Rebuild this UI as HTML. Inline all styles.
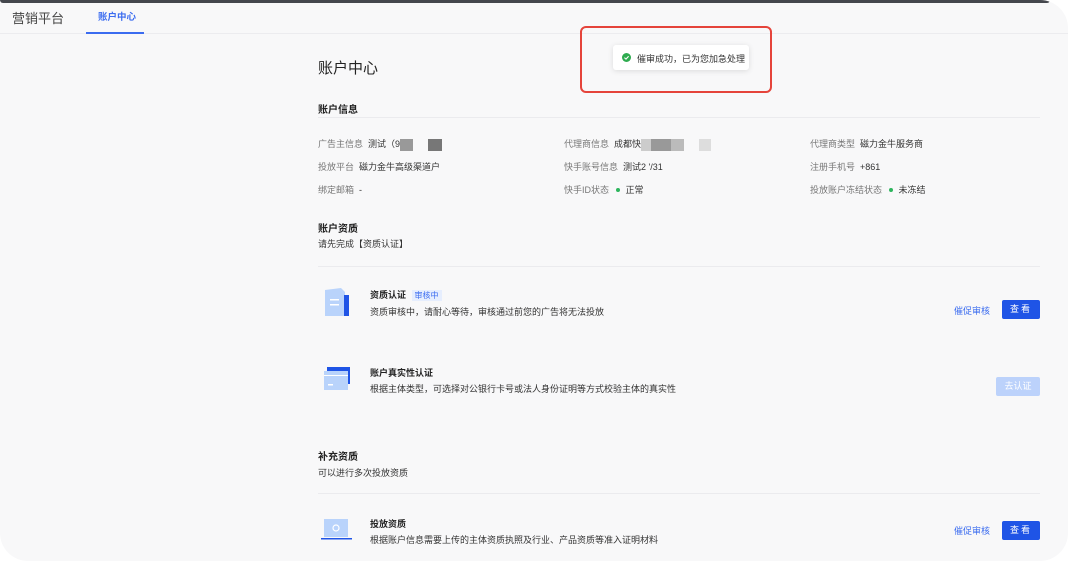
<!DOCTYPE html><html><head><meta charset="utf-8"><style>
*{margin:0;padding:0;box-sizing:border-box}
body{width:1068px;height:561px;overflow:hidden;background:#fff;font-family:"Liberation Sans","Noto Sans CJK SC",sans-serif;position:relative;color:#333}
.frame{position:absolute;left:0;top:0;width:1068px;height:561px;background:#f8f8f9;border-radius:0 28px 28px 28px;overflow:hidden}
.topbar{position:absolute;left:0;top:0;width:1050px;height:3px;background:#44474d;border-radius:0 0 3px 3px}
.nav{position:absolute;left:0;top:3px;width:1068px;height:31px;border-bottom:1px solid #ececef}
.a{position:absolute;white-space:nowrap}
.lbl{color:#777;font-size:9px}
.val{color:#333;font-size:9px}
.hline{position:absolute;left:318px;width:722px;height:1px;background:#ebebee}
.btn{position:absolute;width:38px;height:19px;background:#1f54e6;color:#fff;font-size:9px;text-align:center;line-height:19px;border-radius:2px;letter-spacing:2px}
.link{color:#3b6cf0;font-size:9px}
.dot{display:inline-block;width:4px;height:4px;border-radius:50%;background:#2db55d;margin:0 6px 1px 4px}
.blur{display:inline-block;height:12px;vertical-align:middle}
</style></head><body>
<div class="frame">
<div class="topbar"></div>
<div class="nav"></div>
<div class="a" style="left:12px;top:8px;font-size:13px;color:#444">营销平台</div>
<div class="a" style="left:98px;top:9px;font-size:9.5px;color:#3b6cf0;font-weight:bold">账户中心</div>
<div class="a" style="left:86px;top:32px;width:58px;height:2px;background:#3b6cf0"></div>

<div class="a" style="left:318px;top:57px;font-size:15px;color:#222">账户中心</div>
<div class="a" style="left:318px;top:101px;font-size:10px;font-weight:bold;color:#222">账户信息</div>
<div class="hline" style="top:117px"></div>

<div class="a lbl" style="left:318px;top:137px">广告主信息 <span class="val">&nbsp;测试（9<span class="blur" style="width:13px;background:#999"></span><span class="blur" style="width:14px;margin-left:15px;background:#777"></span></span></div>
<div class="a lbl" style="left:318px;top:160px">投放平台 <span class="val">&nbsp;磁力金牛高级渠道户</span></div>
<div class="a lbl" style="left:318px;top:183px">绑定邮箱 <span class="val">&nbsp;-</span></div>

<div class="a lbl" style="left:564px;top:137px">代理商信息 <span class="val">&nbsp;成都快<span class="blur" style="width:10px;background:#ccc"></span><span class="blur" style="width:20px;background:#999"></span><span class="blur" style="width:13px;background:#bbb"></span><span class="blur" style="width:12px;background:#ddd;margin-left:15px"></span></span></div>
<div class="a lbl" style="left:564px;top:160px">快手账号信息 <span class="val">&nbsp;测试2 '/31</span></div>
<div class="a lbl" style="left:564px;top:183px">快手ID状态 <span class="dot"></span><span class="val">正常</span></div>

<div class="a lbl" style="left:810px;top:137px">代理商类型 <span class="val">&nbsp;磁力金牛服务商</span></div>
<div class="a lbl" style="left:810px;top:160px">注册手机号 <span class="val">&nbsp;+861</span></div>
<div class="a lbl" style="left:810px;top:183px">投放账户冻结状态 <span class="dot"></span><span class="val">未冻结</span></div>

<div class="a" style="left:318px;top:220px;font-size:10px;font-weight:bold;color:#222">账户资质</div>
<div class="a val" style="left:318px;top:237px">请先完成【资质认证】</div>
<div class="hline" style="top:266px"></div>

<svg class="a" style="left:323px;top:287px" width="28" height="32"><path d="M2 3 L18 1 L22 5 L22 29 L2 29Z" fill="#b9d3fb"/><rect x="21" y="8" width="5" height="21" fill="#1f54e6"/><rect x="7" y="12" width="9" height="1.5" fill="#fff"/><rect x="7" y="17" width="9" height="1.5" fill="#fff"/></svg>
<div class="a" style="left:370px;top:288px;font-size:9px;font-weight:bold;color:#222">资质认证 <span style="font-weight:normal;color:#3b6cf0;background:#e6eefe;font-size:8px;padding:1px 3px;margin-left:3px">审核中</span></div>
<div class="a val" style="left:370px;top:305px">资质审核中，请耐心等待，审核通过前您的广告将无法投放</div>
<div class="a link" style="left:954px;top:304px">催促审核</div>
<div class="btn" style="left:1002px;top:300px">查看</div>

<svg class="a" style="left:323px;top:366px" width="28" height="26"><rect x="4" y="1" width="23" height="17" fill="#1f54e6"/><rect x="1" y="5" width="24" height="19" fill="#b9d3fb"/><rect x="1" y="9" width="24" height="1" fill="#fff"/><rect x="5" y="18" width="5" height="1.5" fill="#fff"/></svg>
<div class="a" style="left:370px;top:366px;font-size:9px;font-weight:bold;color:#222">账户真实性认证</div>
<div class="a val" style="left:370px;top:382px">根据主体类型，可选择对公银行卡号或法人身份证明等方式校验主体的真实性</div>
<div class="btn" style="left:996px;top:377px;width:44px;background:#bcd2fb;letter-spacing:0">去认证</div>

<div class="a" style="left:318px;top:448px;font-size:10px;font-weight:bold;color:#222">补充资质</div>
<div class="a val" style="left:318px;top:466px">可以进行多次投放资质</div>
<div class="hline" style="top:493px"></div>

<svg class="a" style="left:321px;top:519px" width="32" height="22"><rect x="3" y="0" width="24" height="18" fill="#b9d3fb"/><circle cx="15" cy="9" r="3" fill="none" stroke="#fff" stroke-width="1.2"/><rect x="0" y="19" width="31" height="1.5" fill="#1f54e6"/></svg>
<div class="a" style="left:370px;top:517px;font-size:9px;font-weight:bold;color:#222">投放资质</div>
<div class="a val" style="left:370px;top:533px">根据账户信息需要上传的主体资质执照及行业、产品资质等准入证明材料</div>
<div class="a link" style="left:954px;top:524px">催促审核</div>
<div class="btn" style="left:1002px;top:521px">查看</div>

<div class="a" style="left:613px;top:45px;width:136px;height:25px;background:#fff;box-shadow:0 1px 6px rgba(0,0,0,.12);border-radius:3px"></div>
<svg class="a" style="left:622px;top:53px" width="9" height="9"><circle cx="4.5" cy="4.5" r="4.5" fill="#2eab4f"/><path d="M2.4 4.6 L4 6.1 L6.6 3.2" fill="none" stroke="#fff" stroke-width="1.1"/></svg>
<div class="a" style="left:637px;top:52px;font-size:9px;color:#333">催审成功，已为您加急处理</div>
<div class="a" style="left:580px;top:26px;width:192px;height:67px;border:2px solid #e5443b;border-radius:6px"></div>
</div>
</body></html>
